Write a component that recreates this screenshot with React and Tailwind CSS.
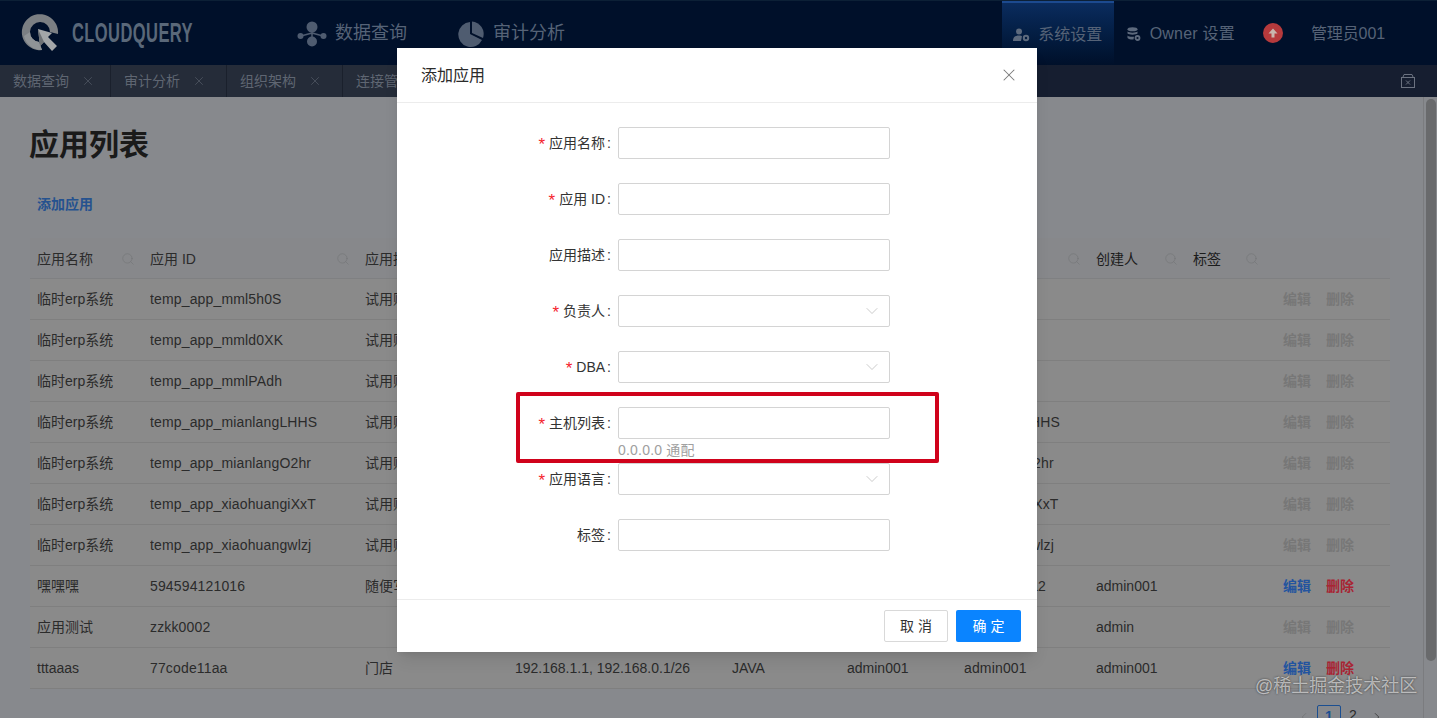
import { ChevronDown, ChevronLeft, ChevronRight, Search, X } from "lucide-react";

const rowGrid =
  "grid grid-cols-[113px_215px_150px_217px_115px_117px_132px_97px_90px_1fr] pl-[7px] items-center";

const rows = [
  { name: "临时erp系统", id: "temp_app_mml5h0S", desc: "试用账号", owner: "" },
  { name: "临时erp系统", id: "temp_app_mmld0XK", desc: "试用账号", owner: "" },
  { name: "临时erp系统", id: "temp_app_mmlPAdh", desc: "试用账号", owner: "" },
  { name: "临时erp系统", id: "temp_app_mianlangLHHS", desc: "试用账号", owner: "mianlangLHHS" },
  { name: "临时erp系统", id: "temp_app_mianlangO2hr", desc: "试用账号", owner: "mianlangO2hr" },
  { name: "临时erp系统", id: "temp_app_xiaohuangiXxT", desc: "试用账号", owner: "xiaohuangiXxT" },
  { name: "临时erp系统", id: "temp_app_xiaohuangwlzj", desc: "试用账号", owner: "xiaohuangwlzj" },
  { name: "嘿嘿嘿", id: "594594121016", desc: "随便写", owner: "xiaohuanga2", creator: "admin001", active: true },
  { name: "应用测试", id: "zzkk0002", desc: "", owner: "", creator: "admin" },
  {
    name: "tttaaas",
    id: "77code11aa",
    desc: "门店",
    hosts: "192.168.1.1, 192.168.0.1/26",
    lang: "JAVA",
    leader: "admin001",
    owner: "admin001",
    creator: "admin001",
    active: true,
  },
];

const fields = [
  { label: "应用名称", required: true },
  { label: "应用 ID", required: true },
  { label: "应用描述" },
  { label: "负责人", required: true, select: true },
  { label: "DBA", required: true, select: true },
  { label: "主机列表", required: true, hint: "0.0.0.0 通配" },
  { label: "应用语言", required: true, select: true },
  { label: "标签" },
];

const Logo = () => (
  <svg width="42" height="42" viewBox="0 0 42 42">
    <path
      d="M34 9 A18 18 0 1 0 22 38 L19 30 A10 10 0 1 1 30 20 L38 22 A18 18 0 0 0 34 9 Z"
      fill="#7b7f83"
    />
    <path d="M4 24 A18 18 0 0 0 22 38 L19 30 A10 10 0 0 1 10 20 Z" fill="#8f9396" />
    <path d="M18 17 L32 21 L28 25 L37 34 L32 39 L24 30 L20 34 Z" fill="#a3a6a8" />
    <path d="M18 17 L24 30 L20 34 Z" fill="#6d7175" />
  </svg>
);

const QueryIcon = () => (
  <svg width="30" height="26" viewBox="0 0 30 26" fill="#4f5c70">
    <path d="M15 7 L15 20 M15 12 L4 15 M15 12 L26 15" stroke="#4f5c70" strokeWidth="1.5" />
    <circle cx="15" cy="6" r="5.5" />
    <circle cx="3.5" cy="15" r="3" />
    <circle cx="26.5" cy="15" r="3" />
    <circle cx="15" cy="20.5" r="5" />
  </svg>
);

const PieIcon = () => (
  <svg width="26" height="26" viewBox="0 0 26 26" fill="#4f5c70">
    <path d="M12 1 A12.5 12.5 0 1 0 24 19 L12 13 Z" />
    <path d="M14 0.5 A12.5 12.5 0 0 1 25 17 L14 12 Z" />
  </svg>
);

const UserGearIcon = () => (
  <svg width="17" height="14" viewBox="0 0 17 14" fill="#5d6a7d">
    <circle cx="6" cy="3.5" r="3" />
    <path d="M0 13 C0 8.5 3 7.5 6 7.5 C7.5 7.5 8.5 7.8 9 8.2 L8 13 Z" />
    <circle cx="13" cy="10" r="2.2" fill="none" stroke="#5d6a7d" strokeWidth="2" />
  </svg>
);

const DbGearIcon = () => (
  <svg width="14" height="15" viewBox="0 0 14 15" fill="#5d6a7d">
    <ellipse cx="5.5" cy="2.2" rx="5" ry="2" />
    <path d="M0.5 4.5 C2 6 9 6 10.5 4.5 V6.5 C9 8 2 8 0.5 6.5 Z" />
    <path d="M0.5 8.5 C2 10 5 10 7 9.7 L6.5 12.5 C4 12.7 2 12.2 0.5 11 Z" />
    <circle cx="10.5" cy="11" r="2" fill="none" stroke="#5d6a7d" strokeWidth="1.8" />
  </svg>
);

const CloseAllIcon = () => (
  <svg width="14" height="14" viewBox="0 0 14 14" fill="none" stroke="#6b7280" strokeWidth="1">
    <rect x="0.5" y="3.5" width="13" height="10" />
    <path d="M2 3 L3 0.5 H11 L12 3 M5 6.5 L9 10.5 M9 6.5 L5 10.5" />
  </svg>
);

const Header = () => (
  <header className="flex h-[65px] bg-[#00102a] border-t border-[#0c2036] text-[#566377]">
    <div className="w-[297px] pl-[20px] flex items-center">
      <Logo />
      <span className="ml-[10px] text-[28px] font-bold text-[#5a6879] origin-left scale-x-[0.59] whitespace-nowrap w-[120px] tracking-wide">
        CLOUDQUERY
      </span>
    </div>
    <div className="flex items-center text-[18px] flex-1 pt-[1px]">
      <QueryIcon />
      <span className="ml-2">数据查询</span>
      <span className="ml-[51px]"><PieIcon /></span>
      <span className="ml-[9px]">审计分析</span>
    </div>
    <div className="flex items-center text-[16px]">
      <div className="h-full w-[112px] pt-[1px] flex items-center justify-center gap-2 border-t-2 border-[#1c4a8f] bg-linear-to-b from-[#0b2c5e] to-[#00102a]">
        <UserGearIcon />
        <span>系统设置</span>
      </div>
      <div className="flex items-center gap-[9px] ml-[13px] pt-[2px]">
        <DbGearIcon />
        <span className="tracking-[0.2px]">Owner 设置</span>
      </div>
      <div className="ml-[28px] w-[20px] h-[20px] rounded-full bg-[#b63a3c] flex items-center justify-center">
        <svg width="10" height="10" viewBox="0 0 10 10" fill="#c9b7ae">
          <path d="M5 0.5 L9.5 5.5 H6.5 V9.5 H3.5 V5.5 H0.5 Z" />
        </svg>
      </div>
      <span className="ml-[28px] mr-[52px] pt-[2px] tracking-[-0.1px]">管理员001</span>
    </div>
  </header>
);

const TabBar = () => (
  <div className="flex h-[32px] bg-[#161e30] items-center text-[14px] text-[#5f6672]">
    {[
      ["数据查询", "w-[111px] pl-[13px]"],
      ["审计分析", "w-[116px] pl-[13px]"],
      ["组织架构", "w-[116px] pl-[13px]"],
      ["连接管理", "w-[116px] pl-[13px]"],
    ].map(([label, cls]) => (
      <div
        key={label}
        className={`${cls} h-full flex items-center bg-[#252c39] border-r border-[#1a202c]`}
      >
        <span>{label}</span>
        <X size={14} strokeWidth={1} className="ml-[12px] text-[#5f6672]" />
      </div>
    ))}
    <div className="ml-auto mr-[22px] flex">
      <CloseAllIcon />
    </div>
  </div>
);

const Cell = ({ children, mono }) => (
  <div className={`whitespace-nowrap overflow-hidden ${mono ? "tracking-[0.15px]" : ""}`}>{children}</div>
);

const HeadCell = ({ label, search = true, dark }) => (
  <div className={`flex items-center justify-between pr-[15px] ${dark ? "text-[#1c1c1c]" : ""}`}>
    <span>{label}</span>
    {search && <Search size={14} strokeWidth={1} className="text-[#727476]" />}
  </div>
);

const AppTable = () => (
  <div className="text-[14px] text-[#2b2b2b]">
    <div className={`${rowGrid} h-[41px] pt-[2px] bg-[#87888b] border-b border-[#7f8082]`}>
      <HeadCell label="应用名称" />
      <HeadCell label="应用 ID" />
      <HeadCell label="应用描述" />
      <HeadCell label="主机列表" />
      <HeadCell label="应用语言" />
      <HeadCell label="负责人" />
      <HeadCell label="DBA" />
      <HeadCell label="创建人" dark />
      <div className="flex items-center gap-[24px] text-[#1c1c1c]">
        <span>标签</span>
        <Search size={14} strokeWidth={1} className="text-[#727476]" />
      </div>
      <div />
    </div>
    {rows.map((row, i) => (
      <div key={i} className={`${rowGrid} h-[41px] bg-[#8a8a8a] border-b border-[#7f7f7f]`}>
        <Cell>{row.name}</Cell>
        <Cell mono>{row.id}</Cell>
        <Cell>{row.desc}</Cell>
        <Cell>{row.hosts}</Cell>
        <Cell>{row.lang}</Cell>
        <Cell>{row.leader}</Cell>
        <Cell mono>{row.owner}</Cell>
        <Cell>{row.creator}</Cell>
        <Cell />
        <div className="flex gap-[15px] font-semibold">
          <span className={row.active ? "text-[#23549f]" : "text-[#777777]"}>编辑</span>
          <span className={row.active ? "text-[#a82433]" : "text-[#777777]"}>删除</span>
        </div>
      </div>
    ))}
  </div>
);

const Pagination = () => (
  <div className="flex justify-end items-start mt-[16px] text-[14px] text-[#2b2b2b]">
    <ChevronLeft size={14} strokeWidth={1.25} className="mt-[5px] text-[#6f7173]" />
    <span className="ml-[6px] w-[24px] h-[24px] border border-[#1b4f91] rounded-[2px] text-[#1b4f91] text-center font-semibold">
      1
    </span>
    <span className="w-[24px] text-center">2</span>
    <ChevronRight size={14} strokeWidth={1.25} className="ml-[5px] mt-[5px] text-[#2b2b2b]" />
    <span className="w-[6px]" />
  </div>
);

const FormRow = ({ field }) => (
  <div className="flex h-[56px] relative">
    <label className="w-[221px] h-[32px] flex items-center justify-end pr-[7px] text-[14px] text-[#333]">
      {field.required && <span className="text-[17px] leading-none mt-[3px] text-[#f5222d] mr-[4px]">*</span>}
      <span>{field.label}</span>
      <span className="ml-[2px]">:</span>
    </label>
    <div className="w-[272px] h-[32px] border border-[#d4d4d4] rounded-[2px] bg-white flex items-center justify-end pr-[7px]">
      {field.select && <ChevronDown size={20} strokeWidth={0.8} className="text-[#b0b0b0]" />}
    </div>
    {field.hint && (
      <div className="absolute left-[221px] top-[34px] text-[14px] leading-[18px] tracking-[0.2px] text-[#a0a0a0]">
        {field.hint}
      </div>
    )}
  </div>
);

const Modal = () => (
  <div className="absolute left-[397px] top-[48px] w-[640px] h-[604px] bg-white flex flex-col shadow-lg">
    <div className="h-[55px] shrink-0 border-b border-[#ececec] flex items-center justify-between pl-[24px] pr-[18px]">
      <span className="text-[16px] text-[#2b2b2b] pt-[2px]">添加应用</span>
      <X size={20} strokeWidth={1.25} className="text-[#7a7a7a]" />
    </div>
    <div className="flex-1 pt-[24px]">
      {fields.map((field) => (
        <FormRow key={field.label} field={field} />
      ))}
    </div>
    <div className="h-[53px] shrink-0 border-t border-[#ececec] flex items-center justify-end gap-[8px] pr-[16px]">
      <button className="w-[64px] h-[32px] border border-[#d9d9d9] rounded-[2px] text-[14px] text-[#333] bg-white">
        取 消
      </button>
      <button className="w-[65px] h-[32px] rounded-[2px] text-[14px] text-white bg-[#0a84ff]">确 定</button>
    </div>
  </div>
);

const App = () => (
  <div
    className="relative w-[1437px] h-[718px] overflow-hidden bg-[#87898d]"
    style={{ fontFamily: '"Liberation Sans", "Noto Sans CJK SC", sans-serif' }}
  >
    <Header />
    <TabBar />
    <div className="flex h-[621px]">
      <main className="flex-1 pr-[33px] pl-[30px]">
        <h1 className="mt-[28px] -ml-px text-[30px] leading-[40px] font-bold text-[#1a1a1a]">应用列表</h1>
        <div className="mt-[29px] pl-[7px] text-[14px] leading-[20px] font-semibold text-[#25528f]">添加应用</div>
        <div className="mt-[24px]">
          <AppTable />
        </div>
        <Pagination />
      </main>
      <aside className="w-[14px] border-l border-[#7b7c7f] pt-[2px] pl-[2px]">
        <div className="w-[10px] h-[562px] rounded-full bg-[#696a6c]" />
      </aside>
    </div>

    <Modal />

    {/* red annotation drawn over the form */}
    <div className="absolute left-[516px] top-[392px] w-[423px] h-[71px] border-[4px] border-[#d0021b] rounded-[2px] pointer-events-none" />

    <div className="absolute left-[1255px] top-[675px] text-[18px] leading-[22px] text-white/60 [text-shadow:0_0_2px_rgba(40,40,40,0.9)] whitespace-nowrap">
      @稀土掘金技术社区
    </div>
  </div>
);

export default App;
